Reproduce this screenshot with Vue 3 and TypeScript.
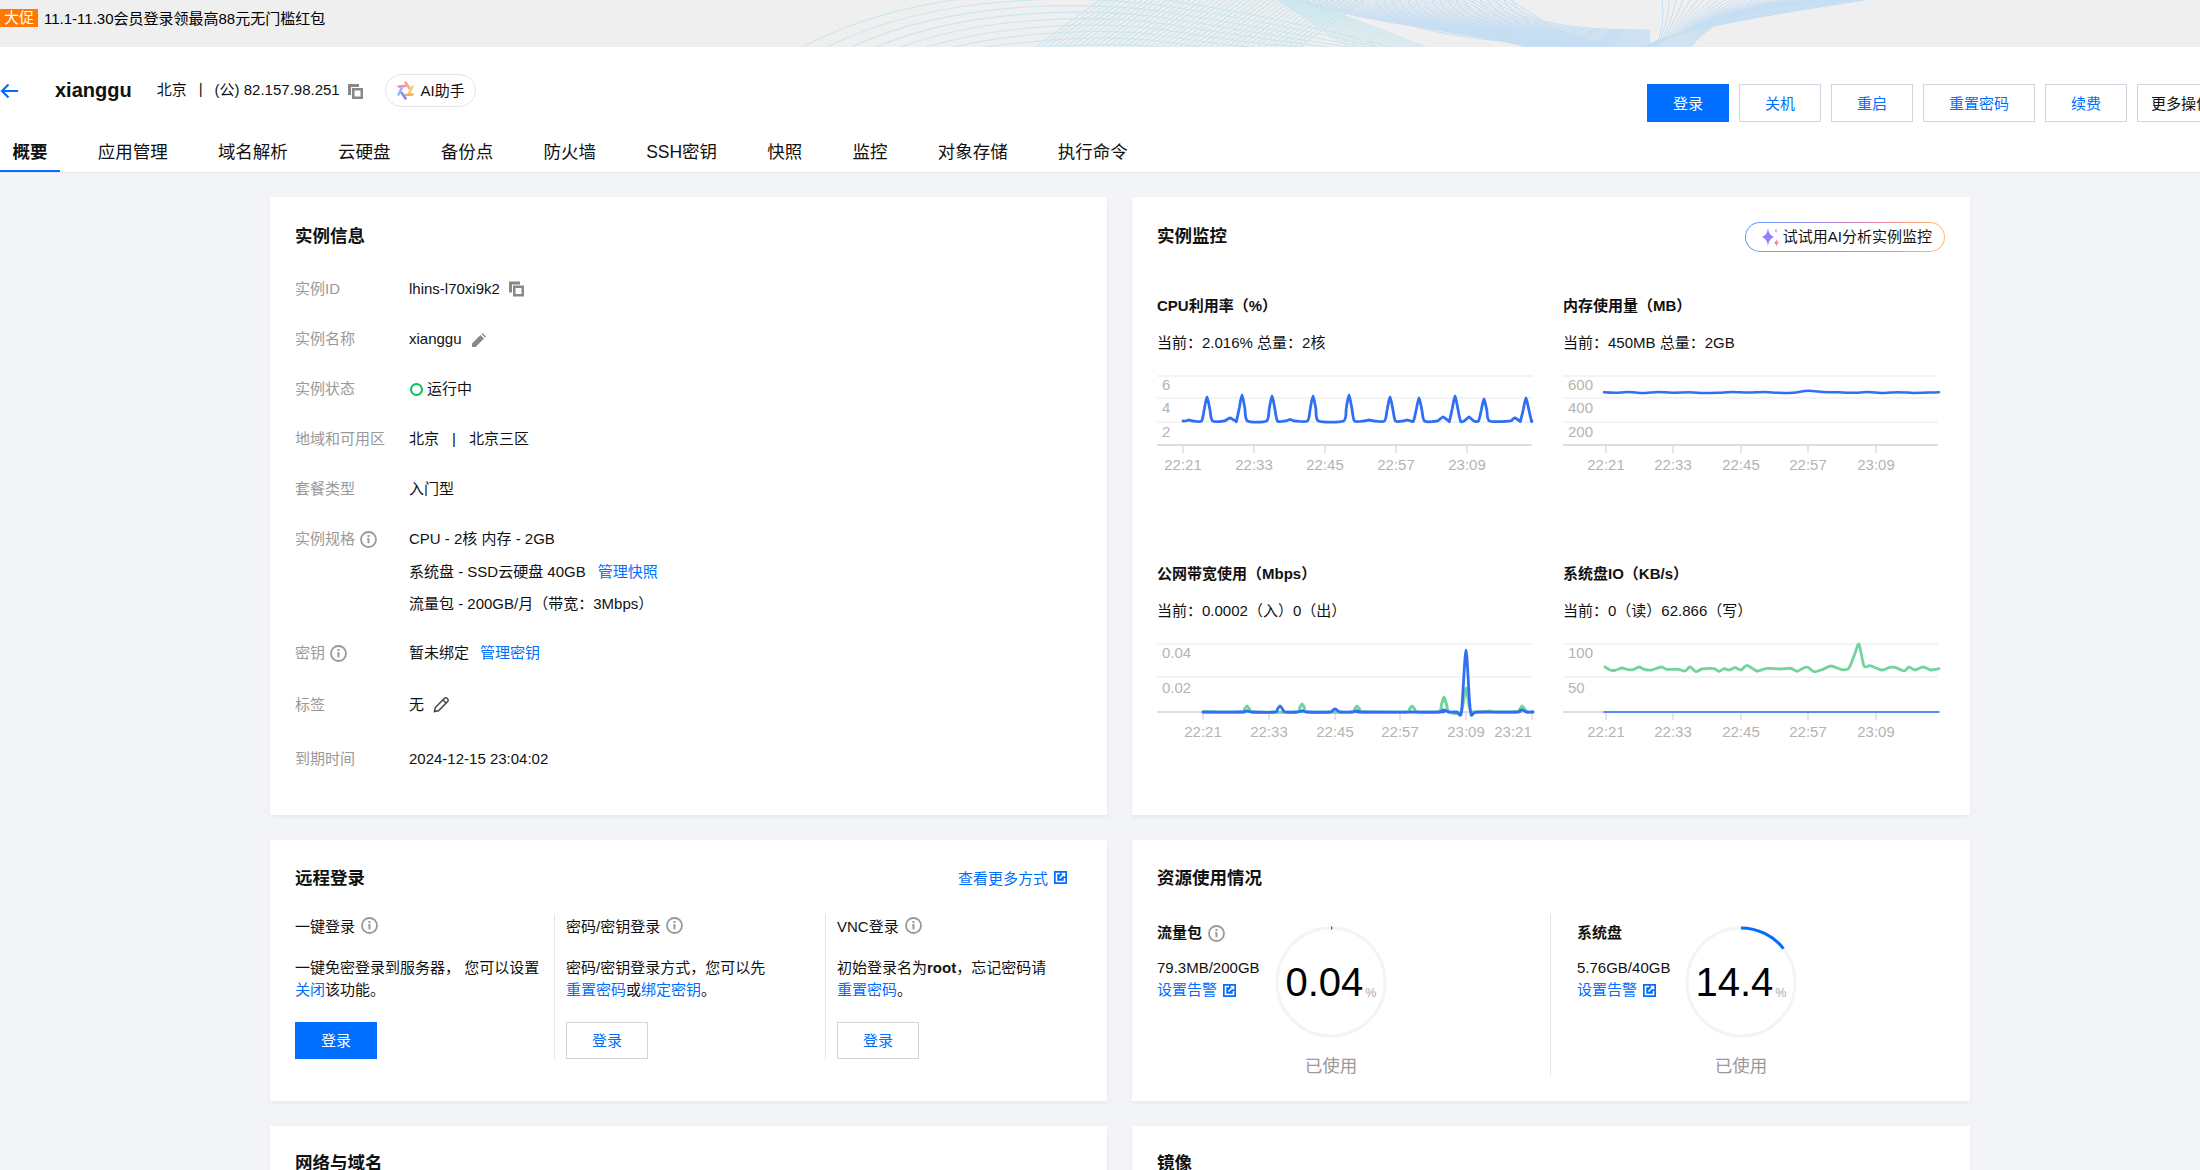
<template>
  <div class="page">
    <!-- promo strip -->
    <div class="promo">
      <span class="promo-tag">大促</span>
      <span class="promo-text">11.1-11.30会员登录领最高88元无门槛红包</span>
      <svg class="promo-wave" width="1100" height="47" viewBox="780 0 1100 47" fill="none" aria-hidden="true">
        <path v-for="(d, i) in waveTeal" :key="'t' + i" :d="d" stroke="#cbe6ee" stroke-width="1.1" />
        <path v-for="(d, i) in waveBlue" :key="'b' + i" :d="d" stroke="#c6def3" stroke-width="1" />
      </svg>
    </div>

    <!-- instance header -->
    <header class="header">
      <div class="header-top">
        <div class="header-left">
          <svg class="back" width="19" height="16" viewBox="0 0 19 16" fill="none">
            <path d="M18 8H2M8.500 1.500 2 8l6.500 6.500" stroke="#006eff" stroke-width="2.200" />
          </svg>
          <span class="name">xianggu</span>
          <span class="meta region">北京</span>
          <span class="meta sep">|</span>
          <span class="meta ip">(公) 82.157.98.251</span>
          <svg class="copy" width="15" height="15" viewBox="0 0 15 15">
            <path d="M0 0h11v3H3v8H0z M4 4h11v11H4z M6.500 6.500v6h6v-6z" fill="#888" fill-rule="evenodd" />
          </svg>
          <span class="ai-chip">
            <svg width="19" height="19" viewBox="0 0 19 19" fill="none" stroke-width="2.600" stroke-linecap="round">
              <path d="M9.500 1.500 13.400 7.250" stroke="#f5a58c" />
              <path d="M16.400 5.500 13.400 11.750" stroke="#f9cf63" />
              <path d="M16.400 13.500 9.500 14" stroke="#f7a95c" />
              <path d="M9.500 17.500 5.600 11.750" stroke="#7f8cf5" />
              <path d="M2.600 13.500 5.600 7.250" stroke="#8fb8f5" />
              <path d="M2.600 5.500 9.500 5" stroke="#f08fb0" />
            </svg>
            <span>AI助手</span>
          </span>
        </div>
        <div class="header-actions">
          <button class="btn btn-primary">登录</button>
          <button class="btn">关机</button>
          <button class="btn">重启</button>
          <button class="btn btn-wide">重置密码</button>
          <button class="btn">续费</button>
          <button class="btn btn-more">更多操作</button>
        </div>
      </div>
      <nav class="tabs">
        <span v-for="(tab, i) in tabs" :key="tab" :class="['tab', { active: i === 0 }]">{{ tab }}</span>
      </nav>
    </header>

    <main class="main">
      <!-- instance info -->
      <section class="card info-card">
        <div class="card-head"><h2>实例信息</h2></div>
        <div class="row">
          <div class="label">实例ID</div>
          <div class="value">
            lhins-l70xi9k2
            <svg class="row-icon copy-small" width="15" height="16" viewBox="0 0 15 15">
              <path d="M0 0h11v3H3v8H0z M4 4h11v11H4z M6.500 6.500v6h6v-6z" fill="#888" fill-rule="evenodd" />
            </svg>
          </div>
        </div>
        <div class="row">
          <div class="label">实例名称</div>
          <div class="value">
            xianggu
            <svg class="row-icon pen" width="14" height="14" viewBox="0 0 14 14">
              <path d="M0 14v-3.600L8.400 2l3.600 3.600L3.600 14z M9.500 1l1-1L14 3.500l-1 1z" fill="#888" />
            </svg>
          </div>
        </div>
        <div class="row">
          <div class="label">实例状态</div>
          <div class="value"><i class="status-dot"></i>运行中</div>
        </div>
        <div class="row">
          <div class="label">地域和可用区</div>
          <div class="value">北京<span class="value-sep">|</span>北京三区</div>
        </div>
        <div class="row">
          <div class="label">套餐类型</div>
          <div class="value">入门型</div>
        </div>
        <div class="row row-spec">
          <div class="label">实例规格<svg class="info" width="17" height="17" viewBox="0 0 17 17"><use href="#i-info" /></svg></div>
          <div class="value">
            <div>CPU - 2核 内存 - 2GB</div>
            <div>系统盘 - SSD云硬盘 40GB<a class="link spec-link">管理快照</a></div>
            <div>流量包 - 200GB/月（带宽：3Mbps）</div>
          </div>
        </div>
        <div class="row row-key">
          <div class="label">密钥<svg class="info" width="17" height="17" viewBox="0 0 17 17"><use href="#i-info" /></svg></div>
          <div class="value">暂未绑定<a class="link key-link">管理密钥</a></div>
        </div>
        <div class="row row-tag">
          <div class="label">标签</div>
          <div class="value">
            无
            <svg class="row-icon tag-pen" width="17" height="17" viewBox="0 0 17 17" fill="none" stroke="#444" stroke-width="1.500">
              <path d="M1.500 15.500l.8-4L11.500 2.300a1.800 1.800 0 0 1 2.500 0l.7.7a1.800 1.800 0 0 1 0 2.500L5.500 14.700z M10 4l3 3" />
            </svg>
          </div>
        </div>
        <div class="row row-last">
          <div class="label">到期时间</div>
          <div class="value">2024-12-15 23:04:02</div>
        </div>
      </section>

      <!-- monitoring -->
      <section class="card monitor-card">
        <div class="card-head">
          <h2>实例监控</h2>
          <span class="ai-try">
            <svg width="24" height="24" viewBox="0 0 24 24">
              <path d="M10 3c.8 5 2 7 6 9-4 2-5.200 4-6 9-.8-5-2-7-6-9 4-2 5.200-4 6-9z" fill="#8f83fb" />
              <path d="M18.500 14c.3 2 .9 3 2.500 3.800-1.600.8-2.200 1.800-2.500 3.700-.3-1.900-.9-2.900-2.500-3.700 1.600-.8 2.200-1.800 2.500-3.800z" fill="#f2839a" />
              <path d="M18 3c.2 1.500.6 2.100 1.800 2.700-1.200.6-1.600 1.200-1.800 2.700-.2-1.500-.6-2.100-1.800-2.700C17.400 5.100 17.800 4.500 18 3z" fill="#c4b5fd" />
            </svg>
            <span class="ai-try-text">试试用AI分析实例监控</span>
          </span>
        </div>
        <div class="chart-grid">
          <div v-for="chart in charts" :key="chart.title" class="chart">
            <div class="chart-title">{{ chart.title }}</div>
            <div class="chart-current">{{ chart.current }}</div>
            <svg class="chart-svg" width="376" height="100" viewBox="0 0 376 100">
              <line v-for="y in chart.grid" :key="y" x1="0" x2="375" :y1="y" :y2="y" stroke="#f1f1f2" stroke-width="1.500" />
              <line x1="0" x2="375" :y1="chart.axis" :y2="chart.axis" stroke="#dedede" stroke-width="2" />
              <text v-for="t in chart.yLabels" :key="t.text" :x="chart.yX" :y="t.y" class="axis-text">{{ t.text }}</text>
              <g v-for="t in chart.xLabels" :key="t.text">
                <line :x1="t.x" :x2="t.x" :y1="chart.axis" :y2="chart.axis + 8" stroke="#dedede" stroke-width="1.500" />
                <text :x="t.labelX ?? t.x" :y="chart.axis + 25" text-anchor="middle" class="axis-text">{{ t.text }}</text>
              </g>
              <path v-for="(line, i) in chart.lines" :key="i" :d="line.d" :stroke="line.color" :stroke-width="line.width" fill="none" stroke-linejoin="round" stroke-linecap="round" />
            </svg>
          </div>
        </div>
      </section>

      <!-- remote login -->
      <section class="card login-card">
        <div class="card-head">
          <h2>远程登录</h2>
          <a class="link more-link">查看更多方式<svg class="ext" width="13" height="13" viewBox="0 0 13 13"><use href="#i-ext" /></svg></a>
        </div>
        <div class="login-cols">
          <div class="login-col">
            <div class="login-title">一键登录<svg class="info" width="17" height="17" viewBox="0 0 17 17"><use href="#i-info" /></svg></div>
            <p>一键免密登录到服务器， 您可以设置<br /><a class="link">关闭</a>该功能。</p>
            <button class="btn btn-primary">登录</button>
          </div>
          <div class="login-col">
            <div class="login-title">密码/密钥登录<svg class="info" width="17" height="17" viewBox="0 0 17 17"><use href="#i-info" /></svg></div>
            <p>密码/密钥登录方式，您可以先<br /><a class="link">重置密码</a>或<a class="link">绑定密钥</a>。</p>
            <button class="btn">登录</button>
          </div>
          <div class="login-col">
            <div class="login-title">VNC登录<svg class="info" width="17" height="17" viewBox="0 0 17 17"><use href="#i-info" /></svg></div>
            <p>初始登录名为<b>root</b>，忘记密码请<br /><a class="link">重置密码</a>。</p>
            <button class="btn">登录</button>
          </div>
        </div>
      </section>

      <!-- resource usage -->
      <section class="card usage-card">
        <div class="card-head"><h2>资源使用情况</h2></div>
        <div class="usage-cols">
          <div v-for="item in usage" :key="item.name" class="usage-item">
            <div class="usage-text">
              <div class="usage-name">{{ item.name }}<svg v-if="item.hint" class="info" width="17" height="17" viewBox="0 0 17 17"><use href="#i-info" /></svg></div>
              <div class="usage-amount">{{ item.amount }}</div>
              <a class="link">设置告警<svg class="ext" width="13" height="13" viewBox="0 0 13 13"><use href="#i-ext" /></svg></a>
            </div>
            <div class="usage-ring">
              <div class="ring">
                <svg width="112" height="112" viewBox="0 0 112 112" fill="none">
                  <circle cx="56" cy="56" r="54" stroke="#f3f4f7" stroke-width="3" />
                  <circle cx="56" cy="56" r="54" stroke="#006eff" stroke-width="3" pathLength="100" :stroke-dasharray="`${item.percent} 100`" transform="rotate(-90 56 56)" />
                </svg>
                <div class="ring-value">{{ item.label }}<small>%</small></div>
              </div>
              <div class="ring-caption">已使用</div>
            </div>
          </div>
        </div>
      </section>

      <section class="card stub-card"><div class="card-head"><h2>网络与域名</h2></div></section>
      <section class="card stub-card"><div class="card-head"><h2>镜像</h2></div></section>
    </main>

    <svg width="0" height="0" class="defs" aria-hidden="true">
      <defs>
        <symbol id="i-info" viewBox="0 0 17 17">
          <circle cx="8.500" cy="8.500" r="7.500" fill="none" stroke="#999" stroke-width="1.800" />
          <path d="M7.500 4h2v2h-2z M7 7.300h2.500v5H7.500V8.500H7z" fill="#999" />
        </symbol>
        <symbol id="i-ext" viewBox="0 0 13 13">
          <path d="M0 0h13v13H0z" fill="#006eff" />
          <path d="M6 2.500H2.500v8h8V7 M5.500 7.500 10.500 2.500 M7.500 2.500h3v3" fill="none" stroke="#fff" stroke-width="1.600" />
        </symbol>
      </defs>
    </svg>
  </div>
</template>

<script setup lang="ts">
type Point = [number, number]

// x, top of the peak, optional half width
type Peak = [number, number, number?]

interface ChartLine {
  d: string
  color: string
  width: number
}

interface XLabel {
  text: string
  x: number
  labelX?: number
}

interface Chart {
  title: string
  current: string
  grid: number[]
  axis: number
  yX: number
  yLabels: { text: string; y: number }[]
  xLabels: XLabel[]
  lines: ChartLine[]
}

const BLUE = '#2f6ff5'
const GREEN = '#72d49b'

const tabs = ['概要', '应用管理', '域名解析', '云硬盘', '备份点', '防火墙', 'SSH密钥', '快照', '监控', '对象存储', '执行命令']

// Catmull-Rom through the samples, so the lines stay soft like the real charts
const smooth = (pts: Point[]): string => {
  let d = `M${pts[0][0]} ${pts[0][1]}`
  for (let i = 0; i < pts.length - 1; i++) {
    const p0 = pts[i - 1] ?? pts[i]
    const p1 = pts[i]
    const p2 = pts[i + 1]
    const p3 = pts[i + 2] ?? p2
    const c1x = p1[0] + (p2[0] - p0[0]) / 8
    const c1y = p1[1] + (p2[1] - p0[1]) / 8
    const c2x = p2[0] - (p3[0] - p1[0]) / 8
    const c2y = p2[1] - (p3[1] - p1[1]) / 8
    d += ` C${c1x.toFixed(1)} ${c1y.toFixed(1)} ${c2x.toFixed(1)} ${c2y.toFixed(1)} ${p2[0].toFixed(1)} ${p2[1].toFixed(1)}`
  }
  return d
}

// flat baseline with peaks on it
const peaks = (start: number, end: number, base: number, list: Peak[], half = 5): Point[] => {
  const pts: Point[] = [[start, base]]
  for (const [x, top, own] of list) {
    const h = own ?? half
    pts.push([x - h, base], [x - h / 2, base - (base - top) * 0.5], [x, top], [x + h / 2, base - (base - top) * 0.5], [x + h, base])
  }
  pts.push([end, base])
  return pts
}

const times = ['22:21', '22:33', '22:45', '22:57', '23:09']

const cpuPeaks: Peak[] = [[32, 45, 4], [50, 22], [73, 43, 6], [85, 20], [115, 21], [133, 44.500, 5], [156, 21], [192, 20], [212, 45, 5], [233, 22], [250, 45, 4], [262, 23], [286, 42, 6], [298, 21], [312, 42, 5], [327, 24], [358, 43, 5], [369, 23]]
const memLine: Point[] = [[41, 17.300], [52, 17.800], [65, 17], [80, 18], [95, 16.900], [110, 17.700], [125, 17.200], [140, 18], [155, 17.800], [170, 17], [185, 17.600], [200, 17], [215, 17.700], [230, 17.800], [245, 15.800], [260, 17], [275, 17.300], [290, 17.800], [305, 17], [320, 18], [335, 17.200], [350, 17.900], [365, 17.600], [376, 17.200]]
const netGreen: Point[] = peaks(46, 376, 69, [[90, 63], [145, 61], [200, 63], [255, 63], [287, 54]], 5)
const netGreenTail: Point[] = [[304, 69], [309, 45], [314, 68], [333, 68], [338, 69], [360, 69], [365, 63], [370, 69], [376, 69]]
const ioGreen: Point[] = [[42, 24], [47, 27], [52, 27.300], [59, 25], [65, 26.700], [70, 26.700], [76, 24], [82, 26.700], [89, 27], [98, 24], [104, 26.300], [115, 26.300], [122, 28], [127, 24], [133, 28.700], [139, 26], [151, 25.700], [156, 28.300], [161, 25.700], [166, 27], [172, 24.700], [178, 27], [184, 22.300], [194, 28], [204, 25.300], [217, 26], [228, 25.300], [234, 28.300], [241, 24.700], [245, 24.300], [251, 28.700], [260, 26.300], [268, 23], [279, 26.700], [286, 25], [292, 10.300], [296, 1], [301, 23], [307, 22.700], [319, 27], [327, 24.300], [332, 24.300], [339, 27.300], [342, 27.700], [346, 24], [352, 27], [360, 24], [368, 27], [376, 25.700]]

const charts: Chart[] = [
  {
    title: 'CPU利用率（%）',
    current: '当前：2.016% 总量：2核',
    grid: [1, 23, 47],
    axis: 70,
    yX: 5,
    yLabels: [{ text: '6', y: 15 }, { text: '4', y: 38 }, { text: '2', y: 62 }],
    xLabels: [26, 97, 168, 239, 310].map((x, i) => ({ text: times[i], x })),
    lines: [{ d: smooth(peaks(26, 375, 46, cpuPeaks, 5.500)), color: BLUE, width: 2.800 }]
  },
  {
    title: '内存使用量（MB）',
    current: '当前：450MB 总量：2GB',
    grid: [1, 23, 47],
    axis: 70,
    yX: 5,
    yLabels: [{ text: '600', y: 15 }, { text: '400', y: 38 }, { text: '200', y: 62 }],
    xLabels: [43, 110, 178, 245, 313].map((x, i) => ({ text: times[i], x })),
    lines: [{ d: smooth(memLine), color: BLUE, width: 2.500 }]
  },
  {
    title: '公网带宽使用（Mbps）',
    current: '当前：0.0002（入）0（出）',
    grid: [1, 34],
    axis: 69,
    yX: 5,
    yLabels: [{ text: '0.04', y: 15 }, { text: '0.02', y: 50 }],
    xLabels: [...[46, 112, 178, 243, 309].map((x, i) => ({ text: times[i], x })), { text: '23:21', x: 375, labelX: 356 }],
    lines: [
      { d: smooth([...netGreen.slice(0, -1), ...netGreenTail]), color: GREEN, width: 3 },
      { d: smooth([...peaks(46, 300, 69, [[90, 68], [123, 63], [145, 68], [178, 66], [200, 68], [287, 67]], 5), [304.500, 69], [309, 7], [313.500, 69], ...peaks(320, 376, 69, [[365, 67]], 5)]), color: BLUE, width: 2.800 }
    ]
  },
  {
    title: '系统盘IO（KB/s）',
    current: '当前：0（读）62.866（写）',
    grid: [1, 34],
    axis: 69,
    yX: 5,
    yLabels: [{ text: '100', y: 15 }, { text: '50', y: 50 }],
    xLabels: [43, 110, 178, 245, 313].map((x, i) => ({ text: times[i], x })),
    lines: [
      { d: smooth(ioGreen), color: GREEN, width: 2.800 },
      { d: 'M41 69H376', color: BLUE, width: 1.500 }
    ]
  }
]

const usage = [
  { name: '流量包', hint: true, amount: '79.3MB/200GB', label: '0.04', percent: 0.4 },
  { name: '系统盘', hint: false, amount: '5.76GB/40GB', label: '14.4', percent: 14.4 }
]

const range = (n: number) => Array.from({ length: n }, (_, i) => i)

// guilloche lines behind the promo strip
const waveTeal = [
  ...range(9).map(i => `M${797 + i * 24} 50 C${930 + i * 15} ${-24 + i * 9} ${1110} ${-8 + i * 6} ${1165} ${0 + i * 6} S${1320 - i * 12} ${26 + i * 4} ${1400 - i * 10} 50`),
  ...range(45).map(i => `M${1034 + i * 6} 48 L${1100 + i * 6} 0`),
  ...range(14).map(i => `M${1278 + i * 2} 0 L${1350 + i * 6} 48`)
]

const waveBlue = [
  ...range(36).map(i => `M${1300 + i * 6} 0 C${1370 + i * 5} ${26 - i * 0.1} ${1470 + i * 3} ${30 + i * 0.4} ${1530 + i * 3} 48`),
  ...range(18).map(i => `M${1512 - i * 8} 0 C${1520 - i * 8} ${20 + i} ${1560 - i * 2} ${30 + i} ${1650} ${30 + i}`),
  ...range(30).map(i => `M${1656 + i * 1.2} 48 C${1660 + i * 2} ${36 - i} ${1665 + i * 4} ${20 - i * 0.5} ${1662 + i * 7} 0`),
  ...range(14).map(i => `M${1640 + i} 48 C${1670 + i} ${34 - i * 0.5} ${1720} ${22 - i * 0.6} ${1865 - i * 6} 0`)
]
</script>

<style>
html,
body {
  margin: 0;
  overflow: hidden;
  background: #f3f4f7;
}
</style>

<style scoped>
.page {
  height: 1170px;
  overflow: hidden;
  font-family: "Liberation Sans", "Noto Sans CJK SC", sans-serif;
  font-size: 15px;
  color: #111;
  background: #f3f4f7;
}

a {
  cursor: pointer;
}

.link {
  color: #006eff;
}

.info {
  flex-shrink: 0;
}

.defs {
  position: absolute;
}

/* promo */
.promo {
  position: relative;
  height: 47px;
  display: flex;
  align-items: flex-start;
  background: #efefef;
  overflow: hidden;
}

.promo-tag {
  margin-top: 9px;
  width: 38px;
  height: 18px;
  line-height: 18px;
  text-align: center;
  color: #fff;
  background: #ff7800;
}

.promo-text {
  margin: 9px 0 0 6px;
  line-height: 19px;
  font-size: 15px;
  color: #000;
}

.promo-wave {
  position: absolute;
  left: 780px;
  top: 0;
}

/* header */
.header {
  background: #fff;
  border-bottom: 1px solid #e6e8ee;
  overflow: hidden;
}

.header-top {
  display: flex;
  align-items: flex-start;
  height: 85px;
}

.header-left {
  flex: 0 0 1647px;
  height: 33px;
  margin-top: 27px;
  display: flex;
  align-items: center;
}

.name {
  margin-left: 36px;
  font-size: 20px;
  font-weight: 700;
}

.meta {
  margin-bottom: 4px;
}

.region {
  margin-left: 25px;
}

.sep {
  margin-left: 12px;
  margin-right: 12px;
}

.copy {
  margin: 1px 0 0 8px;
}

.ai-chip {
  margin-left: 22px;
  width: 91px;
  height: 33px;
  box-sizing: border-box;
  display: flex;
  align-items: center;
  justify-content: center;
  gap: 6px;
  border: 1px solid #dfe3ef;
  border-radius: 17px;
}

.ai-chip span {
  margin-bottom: 2px;
}

.header-actions {
  flex-shrink: 0;
  display: flex;
  gap: 10px;
  margin-top: 37px;
}

.btn {
  width: 82px;
  height: 38px;
  box-sizing: border-box;
  padding: 0 0 2px;
  border: 1px solid #cfd5de;
  background: #fff;
  color: #006eff;
  font: inherit;
  cursor: pointer;
}

.btn-primary {
  border-color: #006eff;
  background: #006eff;
  color: #fff;
}

.btn-wide {
  width: 112px;
}

.btn-more {
  width: 110px;
  padding-left: 13px;
  text-align: left;
  color: #111;
}

.tabs {
  display: flex;
  gap: 25.200px;
  height: 40px;
}

.tab {
  box-sizing: border-box;
  height: 40px;
  padding: 0 12.500px;
  line-height: 40px;
  font-size: 17.500px;
  border-bottom: 2px solid transparent;
}

.tab.active {
  font-weight: 700;
  border-bottom-color: #006eff;
}

/* cards */
.main {
  display: grid;
  grid-template-columns: 837px 838px;
  gap: 25px;
  margin: 24px 0 0 270px;
  width: 1700px;
}

.card {
  box-sizing: border-box;
  padding: 25px;
  background: #fff;
  box-shadow: 0 2px 4px rgba(54, 58, 80, 0.06);
}

.card-head {
  display: flex;
  align-items: flex-start;
  justify-content: space-between;
}

.card-head h2 {
  margin: 0;
  font-size: 17.500px;
  line-height: 28px;
  font-weight: 700;
}

/* instance info */
.info-card {
  height: 618px;
}

.info-card .card-head {
  margin-bottom: 23px;
}

.row {
  display: flex;
  line-height: 32px;
  margin-bottom: 18px;
}

.row-spec {
  margin-bottom: 16.500px;
}

.row-spec .value div {
  line-height: 32.500px;
}

.row-key {
  margin-bottom: 19.500px;
}

.row-tag {
  margin-bottom: 22px;
}

.row-last {
  margin-bottom: 0;
}

.label {
  flex: 0 0 114px;
  display: flex;
  align-items: flex-start;
  height: 32px;
  color: #999;
}

.label .info {
  margin: 8px 0 0 5px;
}

.value {
  display: block;
  flex: 1;
}

.row-icon {
  vertical-align: -3px;
}

.copy-small {
  margin-left: 5px;
}

.pen {
  margin-left: 6px;
}

.tag-pen {
  margin-left: 5px;
}

.status-dot {
  display: inline-block;
  box-sizing: border-box;
  width: 13px;
  height: 13px;
  margin: 0 4px 0 1px;
  vertical-align: -2px;
  border: 2.500px solid #0abf5b;
  border-radius: 50%;
}

.value-sep {
  margin: 0 13px;
}

.spec-link {
  margin-left: 12px;
}

.key-link {
  margin-left: 11px;
}

/* monitoring */
.monitor-card .card-head {
  height: 30px;
  margin-bottom: 44px;
}

.ai-try {
  box-sizing: border-box;
  width: 200px;
  height: 30px;
  display: flex;
  align-items: center;
  justify-content: flex-end;
  gap: 1px;
  padding-right: 12px;
  border: 1.500px solid transparent;
  border-radius: 15px;
  background: linear-gradient(#fff, #fff) padding-box, linear-gradient(90deg, #5b9dff, #9b8cf5, #ee82a6, #ffc266) border-box;
}

.ai-try-text {
  margin-bottom: 3px;
}

.chart-grid {
  display: grid;
  grid-template-columns: 375px 376px;
  column-gap: 31px;
  row-gap: 89px;
}

.chart-title {
  line-height: 20px;
  font-weight: 700;
}

.chart-current {
  margin-top: 17px;
  line-height: 20px;
}

.chart-svg {
  display: block;
  margin-top: 22px;
  overflow: visible;
}

.axis-text {
  font-size: 15px;
  fill: #b7b3b0;
}

/* remote login */
.login-card {
  height: 261px;
}

.login-card .card-head {
  height: 27px;
  margin-bottom: 22px;
}

.login-card h2 {
  margin-top: -1px;
}

.more-link {
  display: flex;
  align-items: center;
  height: 25px;
  margin-right: 15px;
}

.ext {
  margin-left: 6px;
  vertical-align: -2px;
}

.login-cols {
  display: grid;
  grid-template-columns: 259px 271px 1fr;
}

.login-col {
  height: 145px;
}

.login-col + .login-col {
  padding-left: 11px;
  border-left: 1px solid #e5e6ea;
}

.login-title {
  display: flex;
  align-items: center;
  gap: 6px;
  height: 22px;
}

.login-col p {
  margin: 21px 0;
  line-height: 22px;
}

.login-col .btn {
  display: block;
  height: 37px;
}

/* usage */
.usage-card .card-head {
  height: 27px;
  margin-bottom: 22px;
}

.usage-card h2 {
  margin-top: -1px;
}

.usage-cols {
  display: grid;
  grid-template-columns: 393px 1fr;
}

.usage-item {
  display: flex;
  height: 162px;
}

.usage-item + .usage-item {
  padding-left: 26px;
  border-left: 1px solid #e5e6ea;
}

.usage-text {
  flex: 0 0 118px;
  padding-top: 9px;
  line-height: 22px;
}

.usage-item + .usage-item .usage-text {
  flex-basis: 108px;
}

.usage-name {
  display: flex;
  align-items: center;
  gap: 6px;
  height: 20px;
  font-weight: 700;
}

.usage-amount {
  margin-top: 14px;
}

.usage-ring {
  margin-top: 12px;
  width: 112px;
}

.ring {
  position: relative;
  width: 112px;
  height: 113px;
}

.ring-value {
  position: absolute;
  inset: 0;
  display: flex;
  align-items: center;
  justify-content: center;
  font-size: 40px;
  color: #000;
}

.ring-value small {
  align-self: center;
  margin: 20px 0 0 2px;
  font-size: 12.500px;
  color: #aaa;
}

.ring-caption {
  margin-top: 17px;
  line-height: 20px;
  font-size: 17.500px;
  text-align: center;
  color: #999;
}

.stub-card {
  height: 260px;
  padding-top: 23px;
}
</style>
